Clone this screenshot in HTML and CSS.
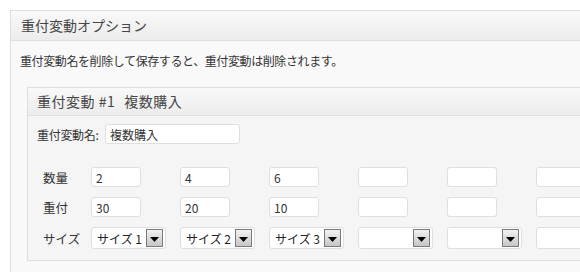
FILE: index.html
```html
<!DOCTYPE html>
<html lang="ja">
<head>
<meta charset="utf-8">
<title>重付変動オプション</title>
<link rel="stylesheet" href="styles.css">
</head>
<body>
<div class="postbox">
  <div class="postbox-head">重付変動オプション</div>
  <div class="postbox-body">
    <p class="note">重付変動名を削除して保存すると、重付変動は削除されます。</p>
    <div class="variant">
      <div class="variant-head">重付変動 #1<span class="gap"></span>複数購入</div>
      <div class="variant-body">
        <div class="name-row">
          <label class="name-label">重付変動名:</label>
          <input class="field name-field" type="text" value="複数購入">
        </div>
        <div class="grid">
          <div class="row-label">数量</div>
          <input class="field num" type="text" value="2">
          <input class="field num" type="text" value="4">
          <input class="field num" type="text" value="6">
          <input class="field num" type="text" value="">
          <input class="field num" type="text" value="">
          <input class="field num" type="text" value="">

          <div class="row-label">重付</div>
          <input class="field num" type="text" value="30">
          <input class="field num" type="text" value="20">
          <input class="field num" type="text" value="10">
          <input class="field num" type="text" value="">
          <input class="field num" type="text" value="">
          <input class="field num" type="text" value="">

          <div class="row-label">サイズ</div>
          <div class="select"><span class="select-text">サイズ 1</span><span class="arrow"><svg width="9" height="5" viewBox="0 0 9 5"><path d="M0 0H9L4.5 5Z" fill="#000"/></svg></span></div>
          <div class="select"><span class="select-text">サイズ 2</span><span class="arrow"><svg width="9" height="5" viewBox="0 0 9 5"><path d="M0 0H9L4.5 5Z" fill="#000"/></svg></span></div>
          <div class="select"><span class="select-text">サイズ 3</span><span class="arrow"><svg width="9" height="5" viewBox="0 0 9 5"><path d="M0 0H9L4.5 5Z" fill="#000"/></svg></span></div>
          <div class="select"><span class="select-text"></span><span class="arrow"><svg width="9" height="5" viewBox="0 0 9 5"><path d="M0 0H9L4.5 5Z" fill="#000"/></svg></span></div>
          <div class="select"><span class="select-text"></span><span class="arrow"><svg width="9" height="5" viewBox="0 0 9 5"><path d="M0 0H9L4.5 5Z" fill="#000"/></svg></span></div>
          <div class="select"><span class="select-text"></span><span class="arrow"><svg width="9" height="5" viewBox="0 0 9 5"><path d="M0 0H9L4.5 5Z" fill="#000"/></svg></span></div>
        </div>
      </div>
    </div>
  </div>
</div>
</body>
</html>
```

FILE: styles.css
```css
html, body {
  overflow: hidden;
}
body {
  margin: 0;
  padding: 10px 0 0 10px;
  background: #fff;
  font-family: "Noto Sans CJK JP", "Liberation Sans", sans-serif;
  color: #333;
  font-size: 12px;
}
.postbox {
  width: 640px;
  border: 1px solid #dfdfdf;
  background: #f9f9f9;
  padding-bottom: 20px;
}
.postbox-head {
  height: 29px;
  line-height: 29px;
  padding-left: 10px;
  font-size: 14px;
  color: #464646;
  border-bottom: 1px solid #dfdfdf;
  background: linear-gradient(to bottom, #f9f9f9, #ececec);
}
.postbox-body {
  padding-top: 12px;
}
.note {
  margin: 0 0 18px 9px;
  line-height: 16px;
  font-size: 12px;
  letter-spacing: -0.4px;
}
.variant {
  margin-left: 16px;
  border: 1px solid #dfdfdf;
  background: #f5f5f5;
}
.variant-head {
  height: 27px;
  line-height: 27px;
  padding-left: 9px;
  font-size: 14px;
  color: #464646;
  letter-spacing: 0.5px;
  border-bottom: 1px solid #dfdfdf;
  background: linear-gradient(to bottom, #f9f9f9, #ececec);
}
.gap {
  display: inline-block;
  width: 9px;
}
.variant-body {
  padding: 8px 0 11px 9px;
}
.name-row {
  display: flex;
  align-items: center;
  height: 20px;
}
.name-label {
  width: 68px;
  font-size: 12px;
  letter-spacing: -0.3px;
}
.field {
  box-sizing: border-box;
  height: 20px;
  border: 1px solid #dfdfdf;
  border-radius: 3px;
  background: #fff;
  padding: 0 4px;
  font-family: "Noto Sans CJK JP", "Liberation Sans", sans-serif;
  font-size: 12px;
  color: #333;
  outline: none;
  margin: 0;
}
.name-field {
  width: 135px;
}
.grid {
  margin: 23px 0 0 6px;
  display: grid;
  grid-template-columns: 48px repeat(6, 89px);
  row-gap: 10px;
  align-items: center;
}
.row-label {
  font-size: 12.5px;
}
.num {
  width: 50px;
}
.select {
  box-sizing: border-box;
  width: 75px;
  height: 22px;
  border: 1px solid #dfdfdf;
  border-radius: 3px;
  background: #fff;
  display: flex;
  align-items: center;
}
.select-text {
  padding-left: 5px;
  font-size: 12px;
  white-space: nowrap;
  color: #222;
}
.arrow {
  box-sizing: border-box;
  margin-left: auto;
  margin-right: 2px;
  width: 17px;
  height: 18px;
  border: 1px solid #7a7a7a;
  background: linear-gradient(to bottom, #f2f2f2, #c6c6c6);
  display: flex;
  align-items: center;
  justify-content: center;
  padding-top: 2px;
}
.arrow svg {
  display: block;
}
```
